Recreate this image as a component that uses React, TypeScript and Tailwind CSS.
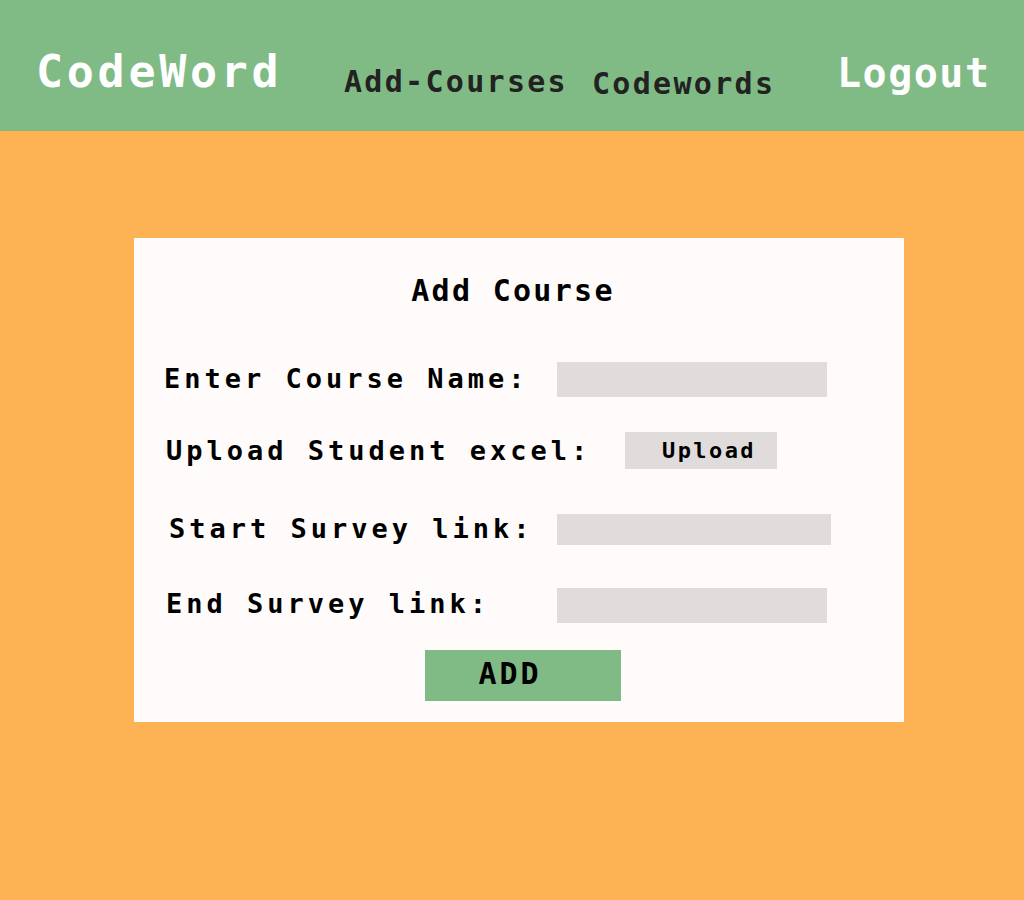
import React from "react";

const mono = { fontFamily: '"DejaVu Sans Mono", monospace' };

export default function App() {
  return (
    <div className="w-[1024px] h-[900px] bg-[#fdb354] font-bold" style={mono}>
      <header className="h-[131px] bg-[#80bb86] flex items-start pl-[36px]">
        <div className="w-[308px] pt-[49px] text-[45px] leading-none tracking-[3.7px] text-white">CodeWord</div>
        <div className="w-[248px] pt-[67px] text-[30px] leading-none tracking-[2.3px] text-[#222]">Add-Courses</div>
        <div className="w-[245px] pt-[69px] text-[30px] leading-none tracking-[2.3px] text-[#222]">Codewords</div>
        <div className="pt-[53px] text-[40px] leading-none tracking-[1.5px] text-white">Logout</div>
      </header>

      <div className="ml-[134px] mt-[107px] w-[770px] h-[484px] bg-[#fffbfa] flex flex-col text-black">
        <div className="mt-[37px] h-[32px] flex items-center justify-center text-[30px] leading-none tracking-[2.3px] pr-[12px]">
          Add Course
        </div>

        <div className="mt-[55px] h-[35px] flex items-center">
          <div className="w-[423px] pl-[30px] pb-[3px] text-[27px] leading-none tracking-[4px]">Enter Course Name:</div>
          <div className="w-[270px] h-[35px] bg-[#e0dcdc]" />
        </div>

        <div className="mt-[35px] h-[37px] flex items-center">
          <div className="w-[491px] pl-[32px] text-[27px] leading-none tracking-[4px]">Upload Student excel:</div>
          <div className="w-[152px] h-[37px] bg-[#e0dcdc] flex items-center justify-center text-[22px] leading-none tracking-[2.4px] pl-[16px]">
            Upload
          </div>
        </div>

        <div className="mt-[45px] h-[31px] flex items-center">
          <div className="w-[423px] pl-[35px] pb-[2px] text-[27px] leading-none tracking-[4px]">Start Survey link:</div>
          <div className="w-[274px] h-[31px] bg-[#e0dcdc]" />
        </div>

        <div className="mt-[43px] h-[35px] flex items-center">
          <div className="w-[423px] pl-[32px] pb-[5px] text-[27px] leading-none tracking-[4px]">End Survey link:</div>
          <div className="w-[270px] h-[35px] bg-[#e0dcdc]" />
        </div>

        <div className="mt-[27px] ml-[291px] w-[196px] h-[51px] bg-[#80bb86] flex items-center justify-center text-[30px] leading-none tracking-[3px] pr-[26px] pb-[3px]">
          ADD
        </div>
      </div>
    </div>
  );
}
